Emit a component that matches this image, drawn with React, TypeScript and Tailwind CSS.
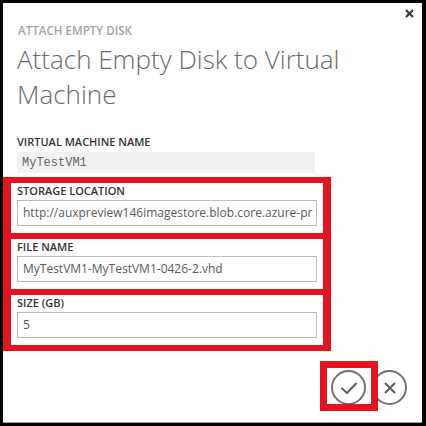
const fields = [
  { label: 'STORAGE LOCATION', value: 'http://auxpreview146imagestore.blob.core.azure-pr' },
  { label: 'FILE NAME', value: 'MyTestVM1-MyTestVM1-0426-2.vhd' },
  { label: 'SIZE (GB)', value: '5' }
]

const CircleButton = ({ kind }: { kind: 'ok' | 'cancel' }) => (
  <div className="flex size-[35px] items-center justify-center rounded-full border-2 border-[#707070]">
    {kind === 'ok' ? (
      <svg width="18" height="14" viewBox="0 0 18 14" fill="none">
        <path d="M2 7.5 L7 12 L16 2.5" stroke="#5e5e5e" strokeWidth="2" strokeLinecap="round" strokeLinejoin="round" />
      </svg>
    ) : (
      <svg width="14" height="14" viewBox="0 0 14 14" fill="none">
        <path d="M2.5 2.5 L11.5 11.5 M11.5 2.5 L2.5 11.5" stroke="#5e5e5e" strokeWidth="2" strokeLinecap="round" />
      </svg>
    )}
  </div>
)

export default function App() {
  return (
    <div className="h-[426px] w-[426px] bg-black pt-[3px] pr-[4px] pb-[3px] pl-[3px] font-['Open_Sans',sans-serif]">
      <div className="relative flex h-full flex-col border-b border-[#9a9a9a] bg-white">
        {/* close */}
        <div className="absolute top-[6px] right-[8px]">
          <svg width="9" height="9" viewBox="0 0 9 9">
            <path d="M1 1 L8 8 M8 1 L1 8" stroke="#3c3c3c" strokeWidth="2.2" />
          </svg>
        </div>

        <div className="flex flex-col pt-[21px] pl-[14px]">
          <div className="pl-[1px] text-[11.6px] leading-[14px] font-semibold text-[#a3a3a3]">ATTACH EMPTY DISK</div>
          <h1 className="mt-[4px] w-[360px] text-[26px] leading-[35px] font-light text-[#6a6a6a]">
            Attach Empty Disk to Virtual Machine
          </h1>

          <div className="mt-[23px] text-[11px] leading-[14px] font-semibold text-[#333]">VIRTUAL MACHINE NAME</div>
          <div className="mt-[3px] flex h-[21px] w-[298px] items-center bg-[#f1f1f1] pl-[5px] font-['Liberation_Mono',monospace] text-[12px] text-[#666]">
            MyTestVM1
          </div>
        </div>

        <div className="mt-[4px] flex w-[328px] flex-col gap-[6px] bg-[#e3141f] px-[8px] py-[6px]">
          {fields.map((f) => (
            <div key={f.label} className="flex flex-col bg-white px-[6px] pt-[1px] pb-[7px]">
              <div className="text-[11px] leading-[14px] font-semibold text-[#333]">{f.label}</div>
              <div className="mt-[2px] flex h-[26px] w-[300px] items-center overflow-hidden border border-[#bcbcbc] pl-[5px] text-[12px] whitespace-nowrap text-[#5a5a5a]">
                {f.value}
              </div>
            </div>
          ))}
        </div>

        <div className="relative mt-[19px] flex justify-end gap-[6px] pr-[15px]">
          <CircleButton kind="ok" />
          <CircleButton kind="cancel" />
          <div className="absolute top-[-9px] right-[44px] h-[50px] w-[58px] border-[7px] border-[#e3141f]" />
        </div>
      </div>
    </div>
  )
}
